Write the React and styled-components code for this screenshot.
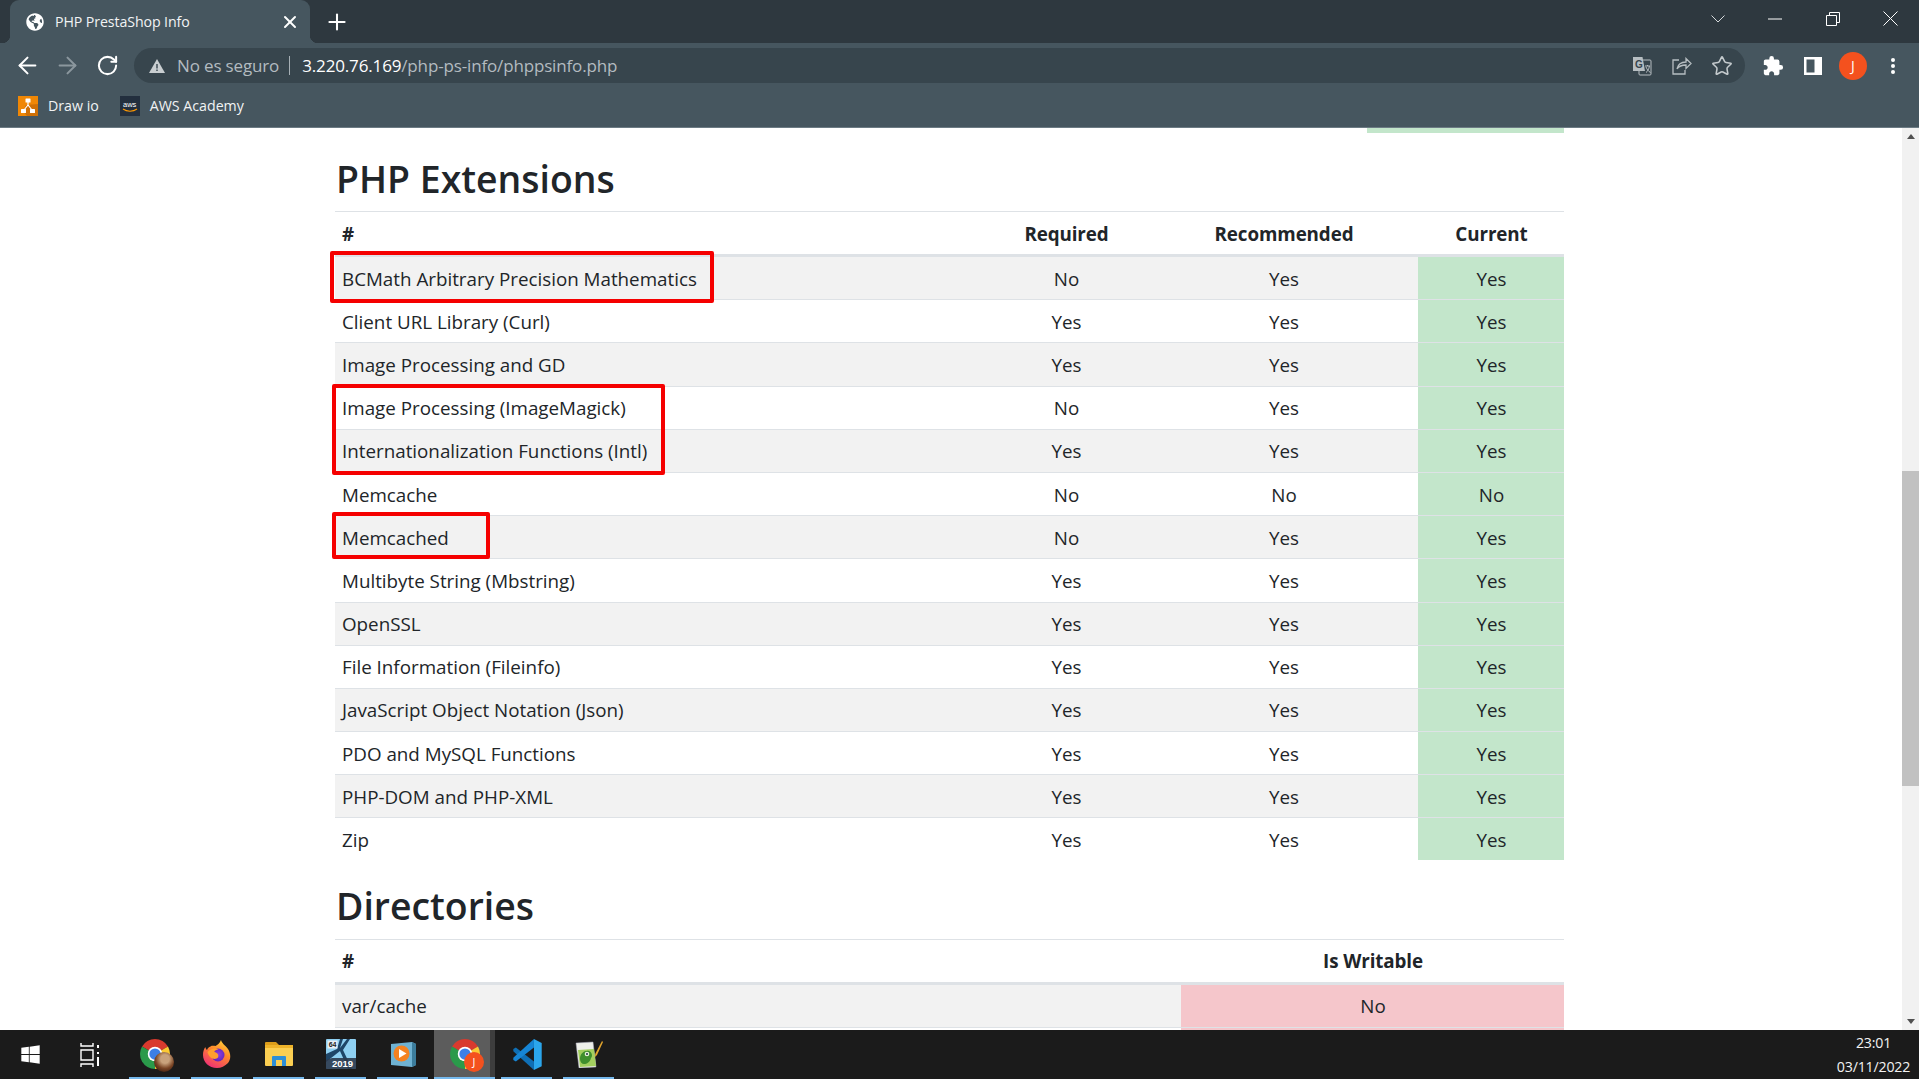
import React from 'react';
import styled, { createGlobalStyle } from 'styled-components';
import { ArrowLeft, ArrowRight, RotateCw, Star, Plus, X } from 'lucide-react';
import { FaGlobeAmericas, FaWindows } from 'react-icons/fa';
import { MdExtension } from 'react-icons/md';

const Global = createGlobalStyle`
  html, body { margin: 0; padding: 0; height: 100%; overflow: hidden; background: #fff; }
  * { box-sizing: border-box; }
  body { font-family: "Open Sans", "Liberation Sans", sans-serif; color: #212529; }
`;

const Screen = styled.div`
  width: 1919px; height: 1079px; display: flex; flex-direction: column; overflow: hidden;
`;

/* browser chrome */
const TabStrip = styled.div`
  height: 43px; flex: none; background: #2e383f; display: flex; align-items: stretch; padding-left: 10px;
`;
const Tab = styled.div`
  position: relative; width: 300px; background: #46565f; border-radius: 9px 9px 0 0;
  display: flex; align-items: center; padding: 0 10px 0 16px; color: #fff;
  &::after { content: ''; position: absolute; right: -8px; bottom: 0; width: 8px; height: 8px;
    background: radial-gradient(circle at 100% 0, transparent 8px, #46565f 8.5px); }
  &::before { content: ''; position: absolute; left: -8px; bottom: 0; width: 8px; height: 8px;
    background: radial-gradient(circle at 0 0, transparent 8px, #46565f 8.5px); }
`;
const TabTitle = styled.span`
  flex: 1; margin-left: 11px; font-size: 14.2px; letter-spacing: -.1px; white-space: nowrap; color: #f1f3f4;
`;
const NewTab = styled.div`
  width: 40px; margin-left: 7px; display: flex; align-items: center; justify-content: center; color: #fff;
`;
const Spacer = styled.div` flex: 1; `;
const WinControls = styled.div` display: flex; align-items: center; height: 37px; `;
const WinBtn = styled.div`
  width: 57.5px; height: 37px; display: flex; align-items: center; justify-content: center;
`;

const Toolbar = styled.div`
  height: 40px; flex: none; background: #46565f; display: flex; align-items: center; padding: 5px 6px 0 7px;
`;
const NavBtn = styled.div`
  width: 40px; height: 35px; flex: none; display: flex; align-items: center; justify-content: center;
  color: ${p => p.$dim ? '#8b979e' : '#fff'};
`;
const Omnibox = styled.div`
  flex: 1; height: 35px; margin: 0 8px 0 7px; background: #37454d; border-radius: 18px;
  display: flex; align-items: center; padding: 0 3px 0 15px; font-size: 17px; white-space: nowrap;
`;
const NotSecure = styled.span` color: #b3bbc0; margin-left: 12px; letter-spacing: -.15px; `;
const Divider = styled.span` width: 1px; height: 19px; background: #a6afb5; margin: 0 12px 0 10px; `;
const Host = styled.span` color: #fff; letter-spacing: -.15px; `;
const Path = styled.span` color: #b3bbc0; letter-spacing: -.15px; `;
const Avatar = styled.div`
  width: 28px; height: 28px; border-radius: 50%; background: #f4511e; color: #fff;
  display: flex; align-items: center; justify-content: center; font-size: 14px;
`;
const BookmarkBar = styled.div`
  height: 45px; flex: none; background: #46565f; border-bottom: 1px solid #6c7b84;
  display: flex; align-items: center; padding: 2px 0 0 18px; font-size: 14.2px; color: #f1f3f4;
`;
const Bookmark = styled.div`
  display: flex; align-items: center; gap: 10px; margin-right: 21px;
`;
const BookmarkLabel = styled.span` margin-top: -2px; `;

/* page */
const Viewport = styled.div` flex: 1; min-height: 0; display: flex; background: #fff; `;
const Page = styled.div`
  position: relative; flex: 1; overflow: hidden; padding: 0 338px 0 335px;
`;
const Stub = styled.div` height: 5px; width: 197px; margin-left: auto; background: #c3e6cb; `;
const Heading = styled.h2`
  margin: 0; height: ${p => p.$next ? '78.2px' : '78px'}; padding-top: ${p => p.$next ? '21px' : '21px'};
  padding-left: 1px; font-size: 37.4px; line-height: 50px; font-weight: 600; color: #212529;
`;
const Row = styled.div`
  display: grid; grid-template-columns: ${p => p.$cols};
  height: ${p => p.$head ? '46px' : p.$last ? '42px' : '43.2px'};
  background: ${p => p.$striped ? '#f2f2f2' : '#fff'};
  border-top: ${p => p.$head ? '1.2px solid #dee2e6' : 'none'};
  border-bottom: ${p => p.$head ? '3px solid #dee2e6' : p.$last ? 'none' : '1.2px solid #dee2e6'};
`;
const Cell = styled.div`
  display: flex; align-items: center; padding: 1px 6px 0 7px; white-space: nowrap;
  justify-content: ${p => p.$center ? 'center' : 'flex-start'};
  font-size: 18.8px;
  font-weight: ${p => p.$head ? 700 : 400};
  letter-spacing: ${p => p.$head ? '-.1px' : '0'};
  color: #212529;
  background: ${p => p.$tone === 'ok' ? '#c3e6cb' : p.$tone === 'bad' ? '#f5c6cb' : 'transparent'};
`;
const Mark = styled.div`
  position: absolute; left: ${p => p.$x}px; top: ${p => p.$y}px; width: ${p => p.$w}px; height: ${p => p.$h}px;
  border: 4px solid #f50000; border-radius: 2px; pointer-events: none;
`;
const Scrollbar = styled.div`
  width: 17px; flex: none; background: #f1f1f1; display: flex; flex-direction: column; align-items: stretch;
`;
const ScrollBtn = styled.div` height: 17px; flex: none; display: flex; align-items: center; justify-content: center; `;
const ScrollArrow = styled.div`
  width: 0; height: 0; border-left: 4.5px solid transparent; border-right: 4.5px solid transparent;
  ${p => p.$up ? 'border-bottom: 5px solid #505050;' : 'border-top: 5px solid #505050;'}
`;
const ScrollTrack = styled.div` flex: 1; padding-top: 326px; `;
const Thumb = styled.div` height: 315px; background: #c1c1c1; `;

/* taskbar */
const Taskbar = styled.div`
  height: 49px; flex: none; background: #1b1b1b; display: flex; align-items: stretch; color: #fff;
`;
const StartBtn = styled.div` width: 60px; display: flex; align-items: center; justify-content: center; `;
const TaskView = styled.div` width: 59px; display: flex; align-items: center; justify-content: center; `;
const TaskApps = styled.div` display: flex; margin-left: 5px; `;
const TaskApp = styled.div`
  position: relative; width: 62px; display: flex; align-items: center; justify-content: center;
  background: ${p => p.$active ? 'linear-gradient(90deg,#5c5c5c 0 56px,#3d3d3d 56px 61px,transparent 61px)' : 'transparent'};
  &::after { content: ''; position: absolute; bottom: 0; height: 2px; background: #76b9ed;
    left: ${p => p.$active ? '0' : '5px'}; right: ${p => p.$active ? '1px' : '6px'}; }
`;
const Clock = styled.div`
  margin-left: auto; width: 84px; padding-right: 7px; display: flex; flex-direction: column; align-items: center; justify-content: center;
  font-size: 14.2px; line-height: 24px; color: #f2f2f2; letter-spacing: -.2px;
`;
const AppGlyph = styled.div` position: relative; width: 36px; height: 36px; margin-top: -1px; display: flex; align-items: center; justify-content: center; `;
const Badge = styled.div`
  position: absolute; right: -1px; bottom: 0; width: 20px; height: 20px; border-radius: 50%;
  background: ${p => p.$photo ? 'radial-gradient(circle at 55% 35%,#c9a27c 0 25%,#7a4525 55%,#3a1c10 85%)' : '#f4511e'};
  color: #fff; font-size: 10.5px; display: flex; align-items: center; justify-content: center;
`;
const IconText = styled.text` font-family: "Liberation Sans", sans-serif; font-weight: 700; fill: #fff; `;

const Chrome = ({ size = 30 }) => (
  <svg width={size} height={size} viewBox="0 0 24 24">
    <path d="M12 12L1.61 6A12 12 0 0 1 22.39 6Z" fill="#d93a2e" />
    <path d="M12 12L22.39 6A12 12 0 0 1 12 24Z" fill="#fcc934" />
    <path d="M12 12L12 24A12 12 0 0 1 1.61 6Z" fill="#2a9a4a" />
    <circle cx="12" cy="12" r="5.800" fill="#fff" />
    <circle cx="12" cy="12" r="4.500" fill="#3d7fe6" />
  </svg>
);
const Firefox = () => (
  <svg width="28" height="28" viewBox="0 0 28 28">
    <defs>
      <linearGradient id="ffx" x1="0.8" y1="0" x2="0.25" y2="1">
        <stop offset="0" stopColor="#ffd63a" /><stop offset=".4" stopColor="#ff8a2b" /><stop offset="1" stopColor="#ee2b78" />
      </linearGradient>
      <radialGradient id="ffb" cx=".55" cy=".45" r=".6">
        <stop offset="0" stopColor="#8f3fe0" /><stop offset="1" stopColor="#5d22b8" />
      </radialGradient>
    </defs>
    <path d="M18 0c.5 3 4 5 7 9 3 5 3 10 0 14-3 3-7 5-11 5C6 28 0 22 0 15c0-3 .8-6 2.300-8 .3 1.600 1 2.400 1.700 3 .5-2 2-3 3.500-3.600 C9 5.500 11 6 12.500 6 14.500 5 17 3 18 0z" fill="url(#ffx)" />
    <circle cx="15" cy="15" r="6.500" fill="url(#ffb)" />
    <path d="M4.500 12c3-3.500 8-4.500 11-2.500-2 0-4 1-4.200 2.500 3 .5 5 3 3.700 5.500-2.500 2.800-9 1.500-10.500-5.500z" fill="#ffa02e" />
  </svg>
);
const Folder = () => (
  <svg width="28" height="24" viewBox="0 0 28 24">
    <path d="M0 1a1 1 0 0 1 1-1h10l3 3H0z" fill="#dc9d1a" />
    <rect x="0" y="3" width="28" height="21" rx="1" fill="#fbcf52" />
    <rect x="0" y="3" width="28" height="3" fill="#eeb32a" />
    <path d="M7 24v-9a1 1 0 0 1 1-1h12a1 1 0 0 1 1 1v9h-4v-6h-6v6z" fill="#2f8fd6" />
  </svg>
);
const Tile2019 = () => (
  <svg width="30" height="30" viewBox="0 0 30 30">
    <rect width="30" height="30" rx="1" fill="#8fd0f2" />
    <path d="M14 0L11 10 0 15v8L14 12 22 30h4L17 11 24 0h-3L14 9 17 0z" fill="#1f4668" />
    <path d="M0 30V21L6 19h24v11z" fill="#2c3a4e" opacity=".9" />
    <rect x="1.500" y="1.500" width="10" height="8" fill="#e8eef3" />
    <IconText x="2.700" y="8" fontSize="7" style={{ fill: '#222' }}>64</IconText>
    <IconText x="6" y="28" fontSize="9.500">2019</IconText>
  </svg>
);
const Player = () => (
  <svg width="25" height="25" viewBox="0 0 25 25">
    <path d="M0 2l21-2 4 2v21l-4 2-21-2z" fill="#6fb2d2" />
    <path d="M21 0l4 2v21l-4 2z" fill="#3c7d9c" />
    <circle cx="10.500" cy="11.500" r="8" fill="#f58220" />
    <path d="M8 7l7.500 4.500L8 16z" fill="#fff" />
  </svg>
);
const Code = () => (
  <svg width="31" height="31" viewBox="0 0 24 24">
    <path d="M1 7.700L3 6.500l14 11v6.500L1 9.500z" fill="#0f6fb5" />
    <path d="M17 0v6.500L3 17.500l-2-1.200v-1.800z" fill="#1685d5" />
    <path d="M17 0l6 3v18l-6 3z" fill="#2ba6ec" />
  </svg>
);
const Notepad = () => (
  <svg width="28" height="27" viewBox="0 0 28 27">
    <path d="M1 2l17-1 3 25-17 1z" fill="#eef0ea" stroke="#aab" strokeWidth=".5" />
    <path d="M3 9l16-1 2 17-16 1z" fill="#a3cf5e" />
    <path d="M5 18c0-6 5-9 9-8 3 1 4 5 2 7-1 4-4 6-7 6-2 0-4-2-4-5z" fill="#3f8f2c" />
    <circle cx="12" cy="13" r="2.300" fill="#e6f2d6" />
    <circle cx="12" cy="13" r="1" fill="#234" />
    <path d="M27 0l1 1-6 13-2 2 .2-3z" fill="#e3a52c" />
  </svg>
);
const DrawIo = () => (
  <svg width="20" height="20" viewBox="0 0 20 20">
    <rect width="20" height="20" fill="#f08705" />
    <path d="M20 8v12H9L5 15l3-6z" fill="#d07005" />
    <path d="M10 5v4M10 9l-4 5M10 9l4 5" stroke="#fff" strokeWidth="1.200" />
    <rect x="7.500" y="2.500" width="5" height="4" rx=".5" fill="#fff" />
    <rect x="3" y="13" width="5" height="4" rx=".5" fill="#fff" />
    <rect x="12" y="13" width="5" height="4" rx=".5" fill="#fff" />
  </svg>
);
const Aws = () => (
  <svg width="20" height="20" viewBox="0 0 20 20">
    <rect width="20" height="20" fill="#232f3e" />
    <IconText x="3" y="11" fontSize="7.500" style={{ fontWeight: 400 }}>aws</IconText>
    <path d="M3 13c4 3 10 3 14 0" stroke="#f90" strokeWidth="1.100" fill="none" />
  </svg>
);
const Translate = () => (
  <svg width="20" height="20" viewBox="0 0 20 20">
    <rect x="7" y="4" width="12" height="15" rx="1" fill="#37454d" stroke="#b7bec2" />
    <path d="M1 1h9.500L13 15H1z" fill="#b7bec2" />
    <IconText x="3" y="11.500" fontSize="10" style={{ fill: '#37454d' }}>G</IconText>
    <path d="M13 10h5M15.500 9v1M14 16.500c2-1.500 3-3.500 3.400-6.500M14 11c1 2.500 2.500 4.500 4.500 5.500" stroke="#b7bec2" fill="none" />
  </svg>
);

const ext = [
  ['BCMath Arbitrary Precision Mathematics', 'No', 'Yes', 'Yes'],
  ['Client URL Library (Curl)', 'Yes', 'Yes', 'Yes'],
  ['Image Processing and GD', 'Yes', 'Yes', 'Yes'],
  ['Image Processing (ImageMagick)', 'No', 'Yes', 'Yes'],
  ['Internationalization Functions (Intl)', 'Yes', 'Yes', 'Yes'],
  ['Memcache', 'No', 'No', 'No'],
  ['Memcached', 'No', 'Yes', 'Yes'],
  ['Multibyte String (Mbstring)', 'Yes', 'Yes', 'Yes'],
  ['OpenSSL', 'Yes', 'Yes', 'Yes'],
  ['File Information (Fileinfo)', 'Yes', 'Yes', 'Yes'],
  ['JavaScript Object Notation (Json)', 'Yes', 'Yes', 'Yes'],
  ['PDO and MySQL Functions', 'Yes', 'Yes', 'Yes'],
  ['PHP-DOM and PHP-XML', 'Yes', 'Yes', 'Yes'],
  ['Zip', 'Yes', 'Yes', 'Yes'],
];
const extCols = '648px 166px 269px 146px';
const dirCols = '846px 383px';

export default function App() {
  return (
    <Screen>
      <Global />
      <TabStrip>
        <Tab>
          <FaGlobeAmericas size={18} color="#fff" />
          <TabTitle>PHP PrestaShop Info</TabTitle>
          <X size={20} strokeWidth={2.4} color="#fff" />
        </Tab>
        <NewTab><Plus size={26} strokeWidth={1.9} /></NewTab>
        <Spacer />
        <WinControls>
          <WinBtn>
            <svg width="14" height="8" viewBox="0 0 14 8"><path d="M.5.5L7 7 13.500.5" stroke="#d5d9dc" fill="none" /></svg>
          </WinBtn>
          <WinBtn>
            <svg width="14" height="2" viewBox="0 0 14 2"><path d="M0 1h14" stroke="#fff" /></svg>
          </WinBtn>
          <WinBtn>
            <svg width="14" height="14" viewBox="0 0 14 14"><path d="M.5 3.500h10v10H.5zM3.500 3.500v-3h10v10h-3" stroke="#fff" fill="none" /></svg>
          </WinBtn>
          <WinBtn>
            <svg width="15" height="15" viewBox="0 0 15 15"><path d="M.5.5l14 14M14.500.5l-14 14" stroke="#fff" fill="none" /></svg>
          </WinBtn>
        </WinControls>
      </TabStrip>

      <Toolbar>
        <NavBtn><ArrowLeft size={27} strokeWidth={1.8} /></NavBtn>
        <NavBtn $dim><ArrowRight size={27} strokeWidth={1.8} /></NavBtn>
        <NavBtn><RotateCw size={23} strokeWidth={2.1} /></NavBtn>
        <Omnibox>
          <svg width="16" height="14" viewBox="0 0 16 14"><path d="M8 0l8 14H0z" fill="#c9ced1" /><path d="M7.300 5h1.400v4.600H7.300zM7.300 10.600h1.400V12H7.300z" fill="#37454d" /></svg>
          <NotSecure>No es seguro</NotSecure>
          <Divider />
          <Host>3.220.76.169</Host><Path>/php-ps-info/phppsinfo.php</Path>
          <Spacer />
          <NavBtn><Translate /></NavBtn>
          <NavBtn>
            <svg width="20" height="18" viewBox="0 0 20 18" fill="none" stroke="#b7bec2" strokeWidth="1.300">
              <path d="M7 3H1v14h12v-4" />
              <path d="M5 12c1-5 4-7 9-7V1.500l5 5-5 5V8c-4 0-7 1-9 4z" />
            </svg>
          </NavBtn>
          <NavBtn><Star size={22} strokeWidth={1.7} color="#c4cacd" /></NavBtn>
        </Omnibox>
        <NavBtn><MdExtension size={22} /></NavBtn>
        <NavBtn>
          <svg width="18" height="18" viewBox="0 0 18 18"><rect width="18" height="18" fill="#fff" /><rect x="2.500" y="2.500" width="8" height="13" fill="#46565f" /></svg>
        </NavBtn>
        <NavBtn><Avatar>J</Avatar></NavBtn>
        <NavBtn>
          <svg width="6" height="18" viewBox="0 0 6 18" fill="#fff"><circle cx="3" cy="3" r="2" /><circle cx="3" cy="9" r="2" /><circle cx="3" cy="15" r="2" /></svg>
        </NavBtn>
      </Toolbar>

      <BookmarkBar>
        <Bookmark><DrawIo /><BookmarkLabel>Draw io</BookmarkLabel></Bookmark>
        <Bookmark><Aws /><BookmarkLabel>AWS Academy</BookmarkLabel></Bookmark>
      </BookmarkBar>

      <Viewport>
        <Page>
          <Stub />
          <Heading>PHP Extensions</Heading>
          <Row $cols={extCols} $head>
            <Cell $head>#</Cell>
            <Cell $head $center>Required</Cell>
            <Cell $head $center>Recommended</Cell>
            <Cell $head $center>Current</Cell>
          </Row>
          {ext.map((r, i) => (
            <Row key={r[0]} $cols={extCols} $striped={i % 2 === 0} $last={i === ext.length - 1}>
              <Cell>{r[0]}</Cell>
              <Cell $center>{r[1]}</Cell>
              <Cell $center>{r[2]}</Cell>
              <Cell $center $tone="ok">{r[3]}</Cell>
            </Row>
          ))}
          <Heading $next>Directories</Heading>
          <Row $cols={dirCols} $head>
            <Cell $head>#</Cell>
            <Cell $head $center>Is Writable</Cell>
          </Row>
          <Row $cols={dirCols} $striped>
            <Cell>var/cache</Cell>
            <Cell $center $tone="bad">No</Cell>
          </Row>
          <Row $cols={dirCols}>
            <Cell />
            <Cell $tone="bad" />
          </Row>
          <Mark $x={330} $y={123} $w={384} $h={52} />
          <Mark $x={332} $y={256} $w={333} $h={91} />
          <Mark $x={332} $y={384} $w={158} $h={47} />
        </Page>
        <Scrollbar>
          <ScrollBtn><ScrollArrow $up /></ScrollBtn>
          <ScrollTrack><Thumb /></ScrollTrack>
          <ScrollBtn><ScrollArrow /></ScrollBtn>
        </Scrollbar>
      </Viewport>

      <Taskbar>
        <StartBtn><FaWindows size={21} color="#fff" /></StartBtn>
        <TaskView>
          <svg width="20" height="24" viewBox="0 0 20 24" fill="none" stroke="#fff" strokeWidth="1.400">
            <path d="M1 0v3h12V0M1 7h12v10H1zM1 24v-3h12v3" />
            <path d="M18 2v3M18 9v2M18 14v9" strokeWidth="2" />
          </svg>
        </TaskView>
        <TaskApps>
          <TaskApp><AppGlyph><Chrome /><Badge $photo /></AppGlyph></TaskApp>
          <TaskApp><AppGlyph><Firefox /></AppGlyph></TaskApp>
          <TaskApp><AppGlyph><Folder /></AppGlyph></TaskApp>
          <TaskApp><AppGlyph><Tile2019 /></AppGlyph></TaskApp>
          <TaskApp><AppGlyph><Player /></AppGlyph></TaskApp>
          <TaskApp $active><AppGlyph><Chrome /><Badge>J</Badge></AppGlyph></TaskApp>
          <TaskApp><AppGlyph><Code /></AppGlyph></TaskApp>
          <TaskApp><AppGlyph><Notepad /></AppGlyph></TaskApp>
        </TaskApps>
        <Clock><span>23:01</span><span>03/11/2022</span></Clock>
      </Taskbar>
    </Screen>
  );
}
